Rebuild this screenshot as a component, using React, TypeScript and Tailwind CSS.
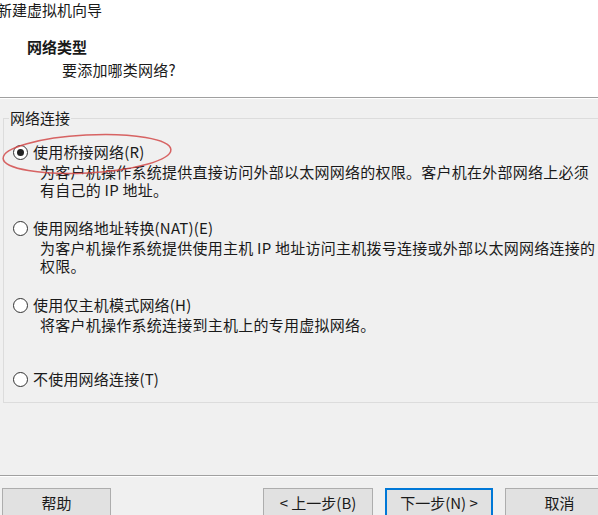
import React from "react";

function Radio({ checked = false }: { checked?: boolean }) {
  return (
    <span className="flex h-[15px] w-[15px] shrink-0 items-center justify-center rounded-full border border-[#333333] bg-white">
      {checked && <span className="h-[7px] w-[7px] rounded-full bg-[#222222]" />}
    </span>
  );
}

function Option({
  label,
  lines,
  checked = false,
  heightClass,
  children,
}: {
  label: string;
  lines?: string[];
  checked?: boolean;
  heightClass: string;
  children?: React.ReactNode;
}) {
  return (
    <div className={`relative ${heightClass}`}>
      {children}
      <div className="ml-[9px] flex h-[20px] items-center">
        <Radio checked={checked} />
        <span className="ml-[5px] whitespace-nowrap leading-[20px] tracking-[0.2px]">{label}</span>
      </div>
      {lines && (
        <div className="ml-[36px] mt-[1px]">
          {lines.map((l, i) => (
            <div key={i} className="whitespace-nowrap leading-[18px] tracking-[0.25px]">
              {l}
            </div>
          ))}
        </div>
      )}
    </div>
  );
}

function Btn({
  children,
  className,
  primary = false,
}: {
  children: React.ReactNode;
  className: string;
  primary?: boolean;
}) {
  return (
    <div
      className={`flex h-[30px] shrink-0 items-center justify-center bg-[#e1e1e1] ${
        primary ? "border-2 border-[#0078d7]" : "border border-[#adadad]"
      } ${className}`}
    >
      <span className="whitespace-nowrap leading-[20px]">{children}</span>
    </div>
  );
}

export default function App() {
  return (
    <div
      className="relative h-[515px] w-[598px] overflow-hidden bg-[#f0f0f0] text-[15px] text-[#1a1a1a]"
      style={{ fontFamily: '"Noto Sans CJK SC", "Noto Sans", sans-serif' }}
    >
      {/* Header */}
      <div className="h-[97px] bg-white">
        <div className="-ml-[3px] leading-[20px] whitespace-nowrap">新建虚拟机向导</div>
        <div className="ml-[27px] mt-[17px] font-bold leading-[20px]">网络类型</div>
        <div className="ml-[62px] mt-[3px] leading-[20px] tracking-[0.2px]">要添加哪类网络?</div>
      </div>
      <div className="h-[1px] bg-[#a0a0a0]" />
      <div className="h-[1px] bg-white" />

      {/* Group box */}
      <fieldset className="ml-[3px] mt-[9px] w-[640px] border border-[#dcdcdc] pb-[13px] pt-[14px]">
        <legend className="ml-[5px] px-[1px] leading-[20px]">网络连接</legend>
        <Option
          checked
          heightClass="h-[76px]"
          label="使用桥接网络(R)"
          lines={[
            "为客户机操作系统提供直接访问外部以太网网络的权限。客户机在外部网络上必须",
            "有自己的 IP 地址。",
          ]}
        >
          <svg
            className="pointer-events-none absolute left-[-4px] top-[-12px]"
            width="180"
            height="50"
            viewBox="0 0 180 50"
          >
            <ellipse
              cx="87"
              cy="24"
              rx="84"
              ry="19"
              transform="rotate(-3 87 24)"
              fill="none"
              stroke="#d24a4a"
              strokeOpacity="0.85"
              strokeWidth="1.5"
            />
          </svg>
        </Option>
        <Option
          heightClass="h-[77px]"
          label="使用网络地址转换(NAT)(E)"
          lines={[
            "为客户机操作系统提供使用主机 IP 地址访问主机拨号连接或外部以太网网络连接的",
            "权限。",
          ]}
        />
        <Option
          heightClass="h-[74px]"
          label="使用仅主机模式网络(H)"
          lines={["将客户机操作系统连接到主机上的专用虚拟网络。"]}
        />
        <Option heightClass="h-[20px]" label="不使用网络连接(T)" />
      </fieldset>

      {/* Bottom separator */}
      <div className="mt-[72px] h-[1px] bg-[#a0a0a0]" />
      <div className="h-[1px] bg-white" />

      {/* Buttons */}
      <div className="mt-[11px] flex w-[640px]">
        <Btn className="ml-[2px] w-[109px]">帮助</Btn>
        <Btn className="ml-[152px] w-[110px]">&lt; 上一步(B)</Btn>
        <Btn primary className="ml-[12px] w-[108px]">
          下一步(N) &gt;
        </Btn>
        <Btn className="ml-[12px] w-[109px]">取消</Btn>
      </div>
    </div>
  );
}
